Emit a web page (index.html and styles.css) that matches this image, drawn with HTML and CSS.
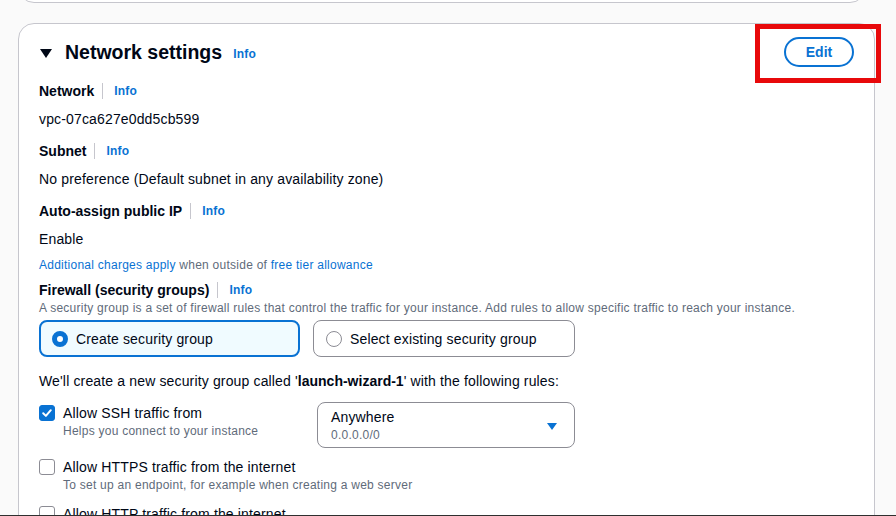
FILE: index.html
```html
<!DOCTYPE html>
<html lang="en">
<head>
<meta charset="utf-8">
<title>Network settings</title>
<link rel="stylesheet" href="styles.css">
</head>
<body>
<div class="viewport">
  <div class="prev-card"></div>
  <section class="card">
    <div class="annot"></div>
    <header class="card-head">
      <div class="title-wrap">
        <span class="caret-down"></span>
        <h2 class="title">Network settings</h2>
        <a class="info">Info</a>
      </div>
      <button class="edit-btn">Edit</button>
    </header>

    <div class="field">
      <div class="label-row"><span class="label">Network</span><a class="info">Info</a></div>
      <div class="value">vpc-07ca627e0dd5cb599</div>
    </div>
    <div class="field">
      <div class="label-row"><span class="label">Subnet</span><a class="info">Info</a></div>
      <div class="value">No preference (Default subnet in any availability zone)</div>
    </div>
    <div class="field">
      <div class="label-row"><span class="label">Auto-assign public IP</span><a class="info">Info</a></div>
      <div class="value">Enable</div>
      <div class="note"><a class="link">Additional charges apply</a> when outside of <a class="link">free tier allowance</a></div>
    </div>
    <div class="field fw">
      <div class="label-row"><span class="label">Firewall (security groups)</span><a class="info">Info</a></div>
      <div class="desc">A security group is a set of firewall rules that control the traffic for your instance. Add rules to allow specific traffic to reach your instance.</div>
      <div class="tiles">
        <div class="tile selected"><span class="radio on"></span><span>Create security group</span></div>
        <div class="tile"><span class="radio"></span><span>Select existing security group</span></div>
      </div>
    </div>
    <p class="create-text">We'll create a new security group called '<b>launch-wizard-1</b>' with the following rules:</p>

    <div class="rule">
      <div class="check-wrap fixed">
        <span class="checkbox on"><svg width="12" height="12" viewBox="0 0 12 12"><path d="M2.2 6.2 L4.9 8.9 L9.8 3.2" fill="none" stroke="#fff" stroke-width="2" stroke-linecap="round" stroke-linejoin="round"/></svg></span>
        <div>
          <div class="check-label">Allow SSH traffic from</div>
          <div class="check-help">Helps you connect to your instance</div>
        </div>
      </div>
      <div class="select">
        <div>
          <div class="sel-main">Anywhere</div>
          <div class="sel-sub">0.0.0.0/0</div>
        </div>
        <span class="sel-caret"></span>
      </div>
    </div>
    <div class="rule r2">
      <div class="check-wrap">
        <span class="checkbox"></span>
        <div>
          <div class="check-label">Allow HTTPS traffic from the internet</div>
          <div class="check-help">To set up an endpoint, for example when creating a web server</div>
        </div>
      </div>
    </div>
    <div class="rule r3">
      <div class="check-wrap">
        <span class="checkbox"></span>
        <div>
          <div class="check-label">Allow HTTP traffic from the internet</div>
          <div class="check-help">To set up an endpoint, for example when creating a web server</div>
        </div>
      </div>
    </div>
  </section>
</div>
</body>
</html>
```
FILE: styles.css
```css
* { box-sizing: border-box; }
html, body { margin: 0; padding: 0; }
body {
  background: #fafafa;
  font-family: "Liberation Sans", Arial, sans-serif;
  color: #000716;
  font-size: 14px;
  letter-spacing: 0.15px;
}
.viewport {
  height: 516px;
  overflow: hidden;
  border-bottom: 1px solid #2f2f2f;
  position: relative;
}
.prev-card {
  margin: -20px 30px 0 18px;
  height: 23px;
  background: #fff;
  border: 1px solid #c6c6cd;
  border-radius: 0 0 16px 16px;
}
.card {
  position: relative;
  margin: 20px 21px 0 18px;
  background: #fff;
  border: 1px solid #c6c6cd;
  border-radius: 16px;
  padding: 13px 20px 40px 20px;
  min-height: 600px;
}
.annot {
  position: absolute;
  left: 736px;
  top: 0px;
  width: 126px;
  height: 59px;
  border: 5px solid #e8090b;
}
.card-head {
  display: flex;
  justify-content: space-between;
  align-items: center;
  height: 30px;
}
.title-wrap { display: flex; align-items: center; }
.caret-down {
  width: 0; height: 0;
  border-left: 6px solid transparent;
  border-right: 6px solid transparent;
  border-top: 9px solid #000716;
  margin: 2px 13px 0 1px;
}
.title {
  margin: 0;
  font-size: 19.5px;
  font-weight: 700;
  line-height: 30px;
  letter-spacing: 0;
}
.title-wrap .info { margin-left: 11px; margin-top: 3px; }
.info {
  color: #0972d3;
  font-size: 12px;
  font-weight: 700;
  text-decoration: none;
  letter-spacing: 0.2px;
}
.edit-btn {
  width: 70px;
  height: 30px;
  border: 2px solid #0972d3;
  border-radius: 20px;
  background: #fff;
  color: #0972d3;
  font-family: inherit;
  font-size: 14px;
  font-weight: 700;
  padding: 0;
}
.field { margin-top: 13px; }
.field + .field { margin-top: 10px; }
.label-row { display: flex; align-items: center; height: 22px; }
.label {
  font-weight: 700;
  padding-right: 8px;
  border-right: 1px solid #c6c6cd;
  line-height: 16px;
  letter-spacing: 0;
}
.label-row .info { margin-left: 11px; }
.value { margin-top: 6px; line-height: 22px; }
.note { margin-top: 7px; font-size: 12px; line-height: 16px; color: #5f6b7a; letter-spacing: 0.25px; }
.link { color: #0972d3; text-decoration: none; }
.field.fw { margin-top: 7px; }
.fw .label-row { height: 20px; }
.desc { font-size: 12px; line-height: 16px; color: #5f6b7a; letter-spacing: 0.25px; }
.tiles { display: flex; gap: 13px; margin-top: 4px; }
.tile {
  width: 262px;
  height: 37px;
  border: 1px solid #8c8c94;
  border-radius: 8px;
  display: flex;
  align-items: center;
  padding-left: 12px;
  gap: 8px;
}
.tile.selected {
  width: 261px;
  border: 2px solid #0972d3;
  background: #f0fbff;
  padding-left: 11px;
}
.radio {
  width: 16px; height: 16px;
  border-radius: 50%;
  border: 1.5px solid #8c8c94;
  background: #fff;
}
.radio.on { border: 5px solid #0972d3; }
.create-text { margin: 13px 0 0; line-height: 22px; }
.create-text b { letter-spacing: 0; }
.rule { display: flex; margin-top: 10px; }
.check-wrap { display: flex; gap: 8px; padding-top: 1px; }
.check-wrap.fixed { flex: 0 0 278px; }
.checkbox {
  flex: none;
  width: 16px; height: 16px;
  margin-top: 2px;
  border: 1.5px solid #8c8c94;
  border-radius: 3px;
  background: #fff;
  display: flex; align-items: center; justify-content: center;
}
.checkbox.on { background: #0972d3; border-color: #0972d3; }
.check-label { line-height: 20px; }
.check-help { font-size: 12px; line-height: 16px; color: #5f6b7a; letter-spacing: 0.25px; }
.select {
  width: 258px;
  height: 46px;
  border: 1px solid #8c8c94;
  border-radius: 8px;
  display: flex;
  align-items: center;
  justify-content: space-between;
  padding: 0 17px 0 13px;
}
.sel-main { line-height: 20px; }
.sel-sub { font-size: 12px; line-height: 16px; color: #5f6b7a; letter-spacing: 0.25px; }
.sel-caret {
  width: 0; height: 0;
  border-left: 5px solid transparent;
  border-right: 5px solid transparent;
  border-top: 7px solid #0972d3;
  margin-top: 2px;
}
.r2 { margin-top: 8px; }
.r3 { margin-top: 10px; }
```
